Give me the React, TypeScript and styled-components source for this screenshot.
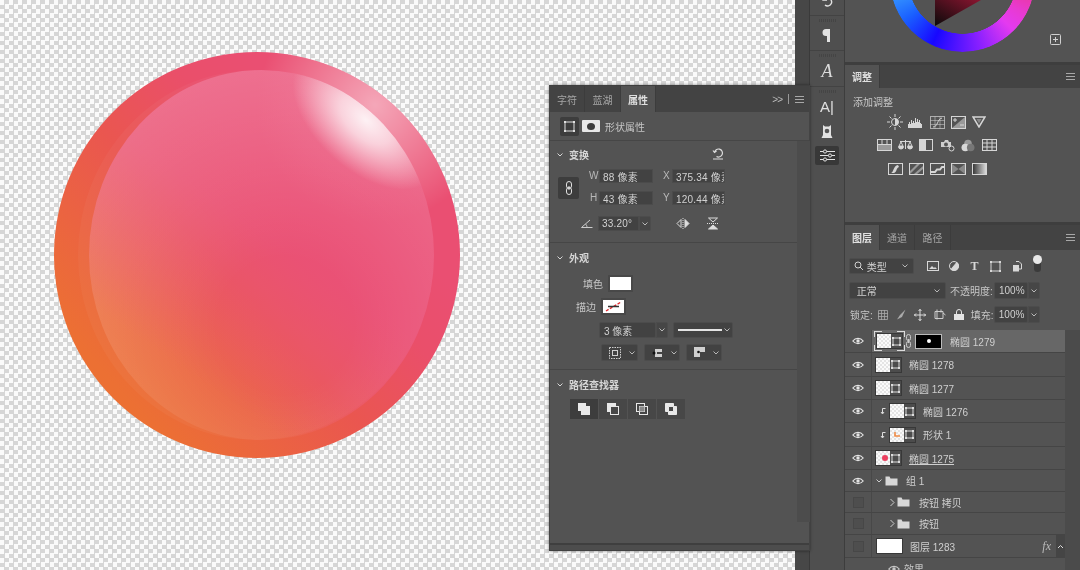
import React from 'react';
import styled, { createGlobalStyle } from 'styled-components';

const Global = createGlobalStyle`
  html, body { margin: 0; padding: 0; width: 1080px; height: 570px; overflow: hidden; background: #535353; }
  * { box-sizing: border-box; }
  body { font-family: "Liberation Sans", "Noto Sans CJK SC", sans-serif; font-size: 10px; color: #cdcdcd; }
`;

const Page = styled.div`position: relative; display: flex; width: 1080px; height: 570px; overflow: hidden; filter: blur(.3px);`;
const Canvas = styled.div`
  width: 795px; height: 570px; padding: 45px 0 0 47px; flex: none;
  background-color: #fafafa;
  background-image: conic-gradient(#d6d6d6 25%, #fafafa 0 50%, #d6d6d6 0 75%, #fafafa 0);
  background-size: 9px 9px;
`;
const SphereSvg = styled.svg`display: block;`;
const CollapsedDock = styled.div`width: 15px; flex: none; background: #474747; border-right: 1px solid #3a3a3a;`;
const IconDock = styled.div`width: 35px; flex: none; background: #4f4f4f; display: flex; flex-direction: column; border-right: 1px solid #3d3d3d;`;
const DockGroup = styled.div<{ $h: number; $top?: number }>`
  height: ${p => p.$h}px; padding-top: ${p => p.$top ?? 3}px; border-bottom: 1px solid #434343; display: flex; flex-direction: column; align-items: center; flex: none;
  &:last-child { border-bottom: 0; }
`;
const DockGrip = styled.div`width: 17px; height: 3px; flex: none; opacity: .8;
  background: repeating-linear-gradient(90deg, #424242 0 1px, transparent 1px 2px);`;
const DockSlot = styled.div<{ $h: number; $active?: boolean; $mt?: number }>`
  height: ${p => p.$h}px; width: 24px; display: flex; align-items: center; justify-content: center; flex: none; color: #e2e2e2;
  margin-top: ${p => p.$mt ?? 0}px;
  background: ${p => (p.$active ? '#383838' : 'transparent')};
  border-radius: 2px;
`;
const ScriptA = styled.span`font: italic 18px "Liberation Serif", serif; color: #dcdcdc;`;
const CursorA = styled.span`font-size: 15px; color: #e0e0e0;`;
const RightCol = styled.div`width: 235px; flex: none; display: flex; flex-direction: column; background: #535353;`;
const ColorPanel = styled.div`height: 62px; position: relative; overflow: hidden; flex: none;`;
const Wheel = styled.div`
  width: 145px; height: 145px; border-radius: 50%; margin: -93px 0 0 45px;
  background: conic-gradient(from 0deg, #f9d24a 0deg, #f2703a 40deg, #ee3355 75deg, #e83ad0 118deg, #e43af0 135deg, #8a20ff 165deg, #1808ff 205deg, #1a60ff 235deg, #3fa8ff 265deg, #39e0c0 300deg, #66e860 330deg, #f9d24a 360deg);
  -webkit-mask: radial-gradient(circle, transparent 54px, #000 54.5px);
  mask: radial-gradient(circle, transparent 54px, #000 54.5px);
`;
const Triangle = styled.svg`position: absolute; left: 89px; top: 0;`;
const PlusBox = styled.div`position: absolute; left: 205px; top: 34px; color: #d0d0d0;`;
const HDivider = styled.div<{ $h: number }>`height: ${p => p.$h}px; background: #3e3e3e; flex: none;`;
const TabBar = styled.div<{ $h: number }>`height: ${p => p.$h}px; background: #434343; display: flex; align-items: stretch; flex: none; position: relative;`;
const Tab = styled.div<{ $w: number; $active?: boolean }>`
  width: ${p => p.$w}px; display: flex; align-items: center; justify-content: center; font-size: 10px;
  background: ${p => (p.$active ? '#535353' : 'transparent')};
  color: ${p => (p.$active ? '#e0e0e0' : '#a5a5a5')};
  font-weight: ${p => (p.$active ? 600 : 400)};
  border-right: 1px solid #3c3c3c;
`;
const TabTools = styled.div`margin-left: auto; display: flex; align-items: center; gap: 5px; padding-right: 5px; color: #bbb;`;
const TabDivider = styled.span`width: 1px; height: 10px; background: #999; margin: 0 1px;`;
const Arrows = styled.span`font-size: 10px; letter-spacing: -1px;`;
const Burger = styled.div`width: 9px; height: 7px; border-top: 1px solid #a8a8a8; border-bottom: 1px solid #a8a8a8; position: relative;
  &::after { content: ''; position: absolute; left: 0; right: 0; top: 2px; height: 1px; background: #a8a8a8; }`;
const AdjustBody = styled.div`height: 134px; flex: none; padding: 6px 0 0 8px;`;
const AdjustRow = styled.div<{ $pl: number; $mt: number }>`display: flex; gap: 1px; padding-left: ${p => p.$pl}px; margin-top: ${p => p.$mt}px; color: #d6d6d6;`;
const AdjustIcon = styled.span`width: 20px; height: 16px; display: flex; align-items: center; justify-content: center;`;
const Label = styled.span<{ $w?: number; $ml?: number }>`font-size: 10px; color: #c6c6c6; white-space: nowrap; flex: none; width: ${p => (p.$w ? `${p.$w}px` : 'auto')}; margin-left: ${p => p.$ml ?? 0}px;`;

const Toolbar = styled.div<{ $h: number; $pl?: number }>`height: ${p => p.$h}px; display: flex; align-items: center; flex: none; padding-left: ${p => p.$pl ?? 4}px;`;
const Drop = styled.div<{ $w: number; $h?: number; $ml?: number; $pl?: number }>`
  width: ${p => p.$w}px; height: ${p => p.$h ?? 16}px; margin-left: ${p => p.$ml ?? 0}px; background: #424242; border: 1px solid #4c4c4c; border-radius: 2px; display: flex; align-items: center; padding: 0 ${p => (p.$pl ? 1 : 4)}px 0 ${p => p.$pl ?? 4}px; flex: none; color: #d0d0d0; font-size: 10px; white-space: nowrap; overflow: hidden;
`;
const Caret = styled.span`margin-left: auto; display: inline-flex; color: #b8b8b8;`;
const StepCaret = styled.div<{ $h?: number }>`width: 12px; height: ${p => p.$h ?? 16}px; background: #464646; border: 1px solid #4c4c4c; border-radius: 0 2px 2px 0; display: flex; align-items: center; justify-content: center; flex: none; color: #b8b8b8;`;
const FilterIcons = styled.div`display: flex; align-items: center; margin-left: 8px; color: #d8d8d8;`;
const FilterCell = styled.span`width: 21px; display: flex; align-items: center; justify-content: center;`;
const SerifT = styled.span`font: bold 12px "Liberation Serif", serif;`;
const LockIcons = styled.div`display: flex; align-items: center; gap: 8px; margin-left: 5px; margin-right: 7px; color: #aaa;`;
const Pip = styled.div`width: 7px; height: 15px; border-radius: 4px; background: #3b3b3b; position: relative; margin-top: -4px;
  &::before { content: ''; position: absolute; left: -1px; top: -2px; width: 9px; height: 9px; border-radius: 50%; background: #e8e8e8; }`;

const LayerScroll = styled.div`display: flex; flex: 1; min-height: 0;`;
const LayerList = styled.div`width: 220px; flex: none;`;
const ScrollTrack = styled.div`flex: 1; background: #4b4b4b;`;
const LayerRow = styled.div<{ $h: number; $sel?: boolean }>`
  height: ${p => p.$h}px; display: flex; align-items: center; border-bottom: 1px solid #454545; flex: none;
  background: ${p => (p.$sel ? '#676767' : 'transparent')};
`;
const EyeCell = styled.div`width: 27px; align-self: stretch; display: flex; align-items: center; justify-content: center; border-right: 1px solid #484848; flex: none; background: #535353; color: #e4e4e4;`;
const EmptyBox = styled.div`width: 11px; height: 11px; border: 1px solid #474747; background: #4e4e4e;`;
const RowBody = styled.div<{ $pl: number }>`display: flex; align-items: center; padding-left: ${p => p.$pl}px; flex: 1; height: 100%; position: relative;`;
const Thumb = styled.div`
  width: 15px; height: 16px; flex: none; border: 1px solid #383838; border-right: 0; position: relative;
  background-color: #fafafa;
  background-image: conic-gradient(#e4e4e4 25%, #fafafa 0 50%, #e4e4e4 0 75%, #fafafa 0);
  background-size: 4px 4px;
`;
const WideThumb = styled.div`width: 27px; height: 16px; background: #fff; border: 1px solid #383838; flex: none;`;
const ShapeMark = styled.div`width: 12px; height: 16px; background: #4c4c4c; border: 1px solid #383838; border-left: 0; flex: none; display: flex; align-items: center; justify-content: center; color: #dcdcdc;`;
const Mask = styled.div`width: 27px; height: 15px; background: #000; border: 1px solid #bbb; display: flex; align-items: center; justify-content: center; flex: none; margin-left: 3px;
  &::after { content: ''; width: 4px; height: 4px; border-radius: 50%; background: #fff; }`;
const Frame = styled.div`display: flex; padding: 2px; margin-left: -2px; background:
  linear-gradient(#ddd,#ddd) 0 0/8px 1px no-repeat, linear-gradient(#ddd,#ddd) 0 0/1px 6px no-repeat,
  linear-gradient(#ddd,#ddd) 100% 0/8px 1px no-repeat, linear-gradient(#ddd,#ddd) 100% 0/1px 6px no-repeat,
  linear-gradient(#ddd,#ddd) 0 100%/8px 1px no-repeat, linear-gradient(#ddd,#ddd) 0 100%/1px 6px no-repeat,
  linear-gradient(#ddd,#ddd) 100% 100%/8px 1px no-repeat, linear-gradient(#ddd,#ddd) 100% 100%/1px 6px no-repeat;`;
const LayerName = styled.span<{ $ml: number; $u?: boolean }>`margin-left: ${p => p.$ml}px; font-size: 10px; color: #cfcfcf; white-space: nowrap; text-decoration: ${p => (p.$u ? 'underline' : 'none')};`;
const RowGap = styled.span`width: 2px; flex: none;`;
const RedDot = styled.i`position: absolute; right: 2px; top: 4px; width: 6px; height: 6px; border-radius: 50%; background: #ec3f5f;`;
const ShapeFlick = styled.span`position: absolute; left: 4px; top: 3px; display: inline-flex;`;
const Fx = styled.span`position: absolute; right: 14px; font: italic 12px "Liberation Serif", serif; color: #bbb;`;
const FxBtn = styled.div`position: absolute; right: 0; top: 0; width: 9px; height: 23px; background: #454545; color: #ddd; display: flex; align-items: center; justify-content: center;`;
const ClipArrow = styled.span`position: absolute; left: 8px; display: inline-flex; color: #ddd;`;
const EffectRow = styled.div`display: flex; align-items: center; gap: 4px; padding: 3px 0 0 43px; color: #c8c8c8;`;

/* Floating properties panel */
const Properties = styled.div`
  position: absolute; left: 549px; top: 85px; width: 261px; height: 466px; background: #535353;
  border: 1px solid #444; border-bottom: 1px solid #404040; border-top: 1px solid #3f3f3f; box-shadow: 0 0 3px rgba(0,0,0,.45);
  display: flex; flex-direction: column;
`;
const PropHead = styled.div`height: 29px; display: flex; align-items: center; padding-left: 10px; border-bottom: 1px solid #464646; flex: none; color: #ddd;`;
const DarkBtn = styled.div<{ $w: number; $h: number }>`width: ${p => p.$w}px; height: ${p => p.$h}px; background: #3d3d3d; border-radius: 2px; display: flex; align-items: center; justify-content: center; flex: none; color: #e0e0e0;`;
const PillIcon = styled.div`width: 18px; height: 12px; background: #e8e8e8; border-radius: 1px; margin-left: 3px; display: flex; align-items: center; justify-content: center;
  &::after { content: ''; width: 8px; height: 7px; border-radius: 50%; background: #3c3c3c; }`;
const PropBody = styled.div`display: flex; flex: 1; min-height: 0;`;
const Sections = styled.div`width: 247px; flex: none;`;
const PropScroll = styled.div`width: 13px; height: 381px; background: #4c4c4c; flex: none;`;
const Section = styled.div<{ $h: number; $top?: number }>`height: ${p => p.$h}px; border-bottom: 1px solid #464646; padding-top: ${p => p.$top ?? 6}px; &:last-child { border-bottom: 0; }`;
const SecTitle = styled.div`height: 15px; display: flex; align-items: center; padding-left: 6px; gap: 5px; font-weight: 600; font-size: 10px; color: #d6d6d6; position: relative;`;
const ResetIcon = styled.span`position: absolute; left: 162px; top: 0; display: inline-flex; color: #ddd;`;
const Transform = styled.div`display: flex; margin-top: 7px;`;
const ChainCell = styled.div`width: 49px; padding: 8px 0 0 8px;`;
const FieldGrid = styled.div`display: grid; grid-template-columns: 54px 53px; column-gap: 19px; row-gap: 8px;`;
const FieldWrap = styled.div`position: relative;`;
const FieldLetter = styled.span<{ $left?: number }>`position: absolute; left: ${p => p.$left ?? -9}px; top: 0; line-height: 14px; font-size: 10px; color: #b9b9b9;`;
const Field = styled.div`height: 14px; background: #424242; border: 1px solid #4b4b4b; padding: 0 3px; display: flex; align-items: center; color: #d2d2d2; font-size: 10px; white-space: nowrap; overflow: hidden; letter-spacing: .2px;`;
const AngleRow = styled.div`display: flex; align-items: center; margin: 11px 0 0 31px; color: #ccc;`;
const AngleField = styled(Field)`width: 41px; height: 15px; margin-left: 5px;`;
const FlipIcons = styled.div`display: flex; align-items: center; gap: 17px; margin-left: 25px; color: #ddd;`;
const SwatchRow = styled.div<{ $mt: number; $pl: number }>`display: flex; align-items: center; gap: 5px; margin-top: ${p => p.$mt}px; padding-left: ${p => p.$pl}px;`;
const Swatch = styled.div<{ $w: number }>`width: ${p => p.$w}px; height: 17px; border: 2px solid #484848; background: #fff; flex: none; display: flex;`;
const DropRow = styled.div<{ $mt: number; $pl: number; $gap: number }>`display: flex; gap: ${p => p.$gap}px; margin-top: ${p => p.$mt}px; padding-left: ${p => p.$pl}px;`;
const LineStroke = styled.span`width: 44px; height: 1.5px; background: #e4e4e4;`;
const FinderRow = styled.div`display: flex; gap: 1px; margin: 7px 0 0 20px;`;
const FinderBtn = styled.div<{ $active?: boolean }>`width: 28px; height: 20px; display: flex; align-items: center; justify-content: center; background: ${p => (p.$active ? '#3d3d3d' : '#474747')}; color: #e8e8e8;`;
const PropFoot = styled.div`height: 7px; border-top: 2px solid #3f3f3f; background: #4d4d4d; flex: none;`;

type IP = { s?: number };
const Svg: React.FC<{ w?: number; h?: number; children: React.ReactNode }> = ({ w = 14, h = 14, children }) => (
  <svg width={w} height={h} viewBox={`0 0 ${w} ${h}`} fill="none" stroke="currentColor" strokeWidth="1">{children}</svg>
);
const Chevron: React.FC = () => <Svg w={8} h={6}><path d="M1.5 1.5 4 4l2.5-2.5" /></Svg>;
const ChevronR: React.FC = () => <Svg w={6} h={9}><path d="M1.5 1 5 4.5 1.5 8" /></Svg>;
const Eye: React.FC = () => (
  <Svg w={12} h={8}><path d="M.8 4C3.5.6 8.5.6 11.2 4 8.5 7.4 3.500 7.400.8 4Z" strokeWidth="1.2" /><circle cx="6" cy="4" r="1.7" fill="currentColor" stroke="none" /></Svg>
);
const Folder: React.FC = () => <Svg w={13} h={10}><path d="M.5 9.5v-9h4l1 2h7v7z" fill="#d8d8d8" stroke="none" /></Svg>;
const BBox: React.FC<IP> = ({ s = 10 }) => (
  <Svg w={s} h={s}><rect x="1" y="1" width={s - 2} height={s - 2} /><g fill="currentColor" stroke="none"><rect width="2" height="2" /><rect x={s - 2} width="2" height="2" /><rect y={s - 2} width="2" height="2" /><rect x={s - 2} y={s - 2} width="2" height="2" /></g></Svg>
);
const Clip: React.FC = () => <Svg w={6} h={8}><path d="M5.5 1.5H2.5v5M1 5l1.5 2L4 5" /></Svg>;

const adjustRows: { pl: number; mt: number; icons: React.ReactNode[] }[] = [
  { pl: 32, mt: 5, icons: [
    <Svg w={16} h={16}><circle cx="8" cy="8" r="3.5" /><path d="M8 4.500a3.500 3.500 0 0 1 0 7z" fill="currentColor" stroke="none" /><path d="M8 0v3M8 13v3M0 8h3M13 8h3M2.500 2.500l2 2M11.500 11.500l2 2M13.500 2.500l-2 2M4.500 11.500l-2 2" /></Svg>,
    <Svg w={16} h={12}><path d="M0 12V8h1V6h1v2h1V4h1v3h1V5h1v2h1V2h1v4h1V3h1v3h1V4h1v3h1v1h1v4z" fill="currentColor" stroke="none" /></Svg>,
    <Svg w={15} h={13}><rect x=".5" y=".5" width="14" height="12" opacity=".7" /><path d="M5 .5v12M10 .5v12M.5 4.500h14M.5 8.500h14" opacity=".5" /><path d="M3 11c5 0 4-8 9-9" /></Svg>,
    <Svg w={15} h={13}><rect x=".5" y=".5" width="14" height="12" /><path d="M14 1 1 12h13z" fill="#999" stroke="none" /><path d="M2 4h4M4 2v4M9 9h4" /></Svg>,
    <Svg w={14} h={12}><path d="M1 1h12L7 11z" strokeWidth="1.5" /><path d="M4.500 3h5L7 7.500z" fill="#888" stroke="none" /></Svg>,
  ] },
  { pl: 21, mt: 7, icons: [
    <Svg w={15} h={12}><rect x=".5" y=".5" width="14" height="11" /><path d="M5 .5v5M10 .5v5M.5 5.500h14" /><rect x="1" y="6" width="13" height="5" fill="#999" stroke="none" /></Svg>,
    <Svg w={15} h={12}><path d="M7.500 1v9M2 2.500h11M3 3 1 7h4zM12 3l-2 4h4z" /><path d="M.5 7.500a2.500 2.500 0 0 0 5 0zM9.500 7.500a2.500 2.500 0 0 0 5 0z" fill="currentColor" /></Svg>,
    <Svg w={14} h={12}><rect x=".5" y=".5" width="13" height="11" /><rect x="1" y="1" width="6" height="10" fill="currentColor" stroke="none" /></Svg>,
    <Svg w={15} h={13}><path d="M1 3h3l1-2h3l1 2h2v5H1z" fill="#cfcfcf" stroke="none" /><circle cx="6" cy="5.500" r="2" fill="#555" stroke="none" /><circle cx="11.500" cy="9.500" r="2.500" /></Svg>,
    <Svg w={14} h={13}><circle cx="7" cy="4.500" r="3.800" fill="#9a9a9a" stroke="none" /><circle cx="4.300" cy="8.500" r="3.800" fill="#d8d8d8" stroke="none" /><circle cx="9.700" cy="8.500" r="3.800" fill="#777" stroke="none" /></Svg>,
    <Svg w={15} h={12}><rect x=".5" y=".5" width="14" height="11" /><path d="M5 .5v11M10 .5v11M.5 4h14M.5 8h14" /></Svg>,
  ] },
  { pl: 32, mt: 8, icons: [
    <Svg w={15} h={12}><rect x=".5" y=".5" width="14" height="11" /><path d="M3 10c3-1 2-7 7-8l1 2c-3 1-2 5-5 6z" fill="currentColor" stroke="none" /></Svg>,
    <Svg w={15} h={12}><rect x=".5" y=".5" width="14" height="11" /><path d="M1 8 8 1h3L1 11zM5 11 14 3v3l-6 5z" fill="#999" stroke="none" /></Svg>,
    <Svg w={15} h={12}><rect x=".5" y=".5" width="14" height="11" /><path d="M1 9h4l2-2.500h3L12 4h2" strokeWidth="2" /></Svg>,
    <Svg w={15} h={12}><rect x=".5" y=".5" width="14" height="11" /><path d="M1 1 7.500 6 1 11zM14 1 7.500 6l6.500 5z" fill="#888" stroke="none" /></Svg>,
    <Svg w={15} h={12}><defs><linearGradient id="gm"><stop stopColor="#333" /><stop offset="1" stopColor="#e0e0e0" /></linearGradient></defs><rect x=".5" y=".5" width="14" height="11" fill="url(#gm)" /></Svg>,
  ] },
];

type LR = { name: string; eye?: boolean; indent?: 'clip'; kind?: 'sel' | 'thumb' | 'group' | 'folder' | 'white'; u?: boolean; mark?: 'dot' | 'shape'; h: number };
const layers: LR[] = [
  { name: '椭圆 1279', eye: true, kind: 'sel', h: 23 },
  { name: '椭圆 1278', eye: true, kind: 'thumb', h: 24 },
  { name: '椭圆 1277', eye: true, kind: 'thumb', h: 23 },
  { name: '椭圆 1276', eye: true, kind: 'thumb', indent: 'clip', h: 23 },
  { name: '形状 1', eye: true, kind: 'thumb', indent: 'clip', mark: 'shape', h: 24 },
  { name: '椭圆 1275', eye: true, kind: 'thumb', u: true, mark: 'dot', h: 23 },
  { name: '组 1', eye: true, kind: 'group', h: 22 },
  { name: '按钮 拷贝', kind: 'folder', h: 21 },
  { name: '按钮', kind: 'folder', h: 22 },
  { name: '图层 1283', kind: 'white', h: 23 },
];

const LayerBody: React.FC<{ l: LR }> = ({ l }) => {
  if (l.kind === 'sel') return (
    <RowBody $pl={4}>
      <Frame><Thumb /><ShapeMark><BBox s={9} /></ShapeMark></Frame>
      <Svg w={7} h={14}><path d="M1.500 2.500a2 2 0 0 1 4 0v2a2 2 0 0 1-4 0zM1.500 9.500a2 2 0 0 1 4 0v2a2 2 0 0 1-4 0zM3.500 5v4" stroke="#ccc" /></Svg>
      <Mask />
      <LayerName $ml={8}>{l.name}</LayerName>
    </RowBody>
  );
  if (l.kind === 'group') return (
    <RowBody $pl={3}><Chevron /><RowGap /><Folder /><LayerName $ml={8}>{l.name}</LayerName></RowBody>
  );
  if (l.kind === 'folder') return (
    <RowBody $pl={17}><ChevronR /><RowGap /><Folder /><LayerName $ml={9}>{l.name}</LayerName></RowBody>
  );
  if (l.kind === 'white') return (
    <RowBody $pl={4}><WideThumb /><LayerName $ml={7}>{l.name}</LayerName><Fx>fx</Fx><FxBtn><Svg w={7} h={5}><path d="M1 4l2.500-2.500L6 4" /></Svg></FxBtn></RowBody>
  );
  return (
    <RowBody $pl={l.indent ? 17 : 3}>
      {l.indent && <ClipArrow><Clip /></ClipArrow>}
      <Thumb>
        {l.mark === 'dot' && <RedDot />}
        {l.mark === 'shape' && <ShapeFlick><Svg w={7} h={7}><path d="M1 1v4h5" stroke="#ee8a45" strokeWidth="1.600" /></Svg></ShapeFlick>}
      </Thumb>
      <ShapeMark><BBox s={9} /></ShapeMark>
      <LayerName $ml={7} $u={l.u}>{l.name}</LayerName>
    </RowBody>
  );
};

const Sphere: React.FC = () => (
  <SphereSvg width="420" height="420" viewBox="47 45 420 420">
    <defs>
      <linearGradient id="outerG" gradientUnits="userSpaceOnUse" x1="110" y1="380" x2="350" y2="170">
        <stop offset="0" stopColor="#ec7033" />
        <stop offset=".5" stopColor="#ea5650" />
        <stop offset=".8" stopColor="#ea4f6a" />
        <stop offset="1" stopColor="#ea4f72" />
      </linearGradient>
      <radialGradient id="outerGlow" gradientUnits="userSpaceOnUse" cx="375" cy="105" r="118">
        <stop offset="0" stopColor="#fff" stopOpacity=".5" />
        <stop offset="1" stopColor="#fff" stopOpacity="0" />
      </radialGradient>
      <linearGradient id="pinkWash" gradientUnits="userSpaceOnUse" x1="200" y1="380" x2="290" y2="250">
        <stop offset="0" stopColor="#ea5078" stopOpacity="0" />
        <stop offset="1" stopColor="#ea5078" stopOpacity=".8" />
      </linearGradient>
      <radialGradient id="innerGlow" gradientUnits="userSpaceOnUse" cx="285" cy="325" r="270">
        <stop offset=".25" stopColor="#fff" stopOpacity="0" />
        <stop offset="1" stopColor="#fff" stopOpacity=".19" />
      </radialGradient>
      <radialGradient id="spot" gradientUnits="userSpaceOnUse" cx="0" cy="0" r="1" gradientTransform="translate(366 120) rotate(42) scale(88 50)">
        <stop offset="0" stopColor="#fff" stopOpacity=".9" />
        <stop offset=".35" stopColor="#fff" stopOpacity=".68" />
        <stop offset="1" stopColor="#fff" stopOpacity="0" />
      </radialGradient>
      <clipPath id="innerClip"><ellipse cx="261.500" cy="255" rx="172.500" ry="185" /></clipPath>
    </defs>
    <circle cx="257" cy="255" r="203" fill="url(#outerG)" />
    <circle cx="257" cy="255" r="203" fill="url(#outerGlow)" />
    <ellipse cx="256" cy="255" rx="178" ry="185" fill="#fff" opacity=".035" />
    <ellipse cx="261.500" cy="255" rx="172.500" ry="185" fill="url(#pinkWash)" />
    <ellipse cx="261.500" cy="255" rx="172.500" ry="185" fill="url(#innerGlow)" />
    <g clipPath="url(#innerClip)"><rect x="240" y="40" width="240" height="220" fill="url(#spot)" /></g>
  </SphereSvg>
);

export default function App() {
  return (
    <Page>
      <Global />
      <Canvas><Sphere /></Canvas>
      <CollapsedDock />
      <IconDock>
        <DockGroup $h={16} $top={0}>
          <DockSlot $h={14} $mt={-5}><Svg w={14} h={14}><path d="M3 3h5a4 4 0 1 1-3 7M3 1v4h4" strokeWidth="1.400" /></Svg></DockSlot>
        </DockGroup>
        <DockGroup $h={35}>
          <DockGrip />
          <DockSlot $h={26}><Svg w={10} h={15}><path d="M9 1H4a3.500 3.500 0 0 0 0 7h1v6h3V1" fill="currentColor" stroke="none" /></Svg></DockSlot>
        </DockGroup>
        <DockGroup $h={36}>
          <DockGrip />
          <DockSlot $h={28}><ScriptA>A</ScriptA></DockSlot>
        </DockGroup>
        <DockGroup $h={83}>
          <DockGrip />
          <DockSlot $h={26}><CursorA>A|</CursorA></DockSlot>
          <DockSlot $h={24}><Svg w={12} h={15}><path d="M2 1l2 1.500h4L10 1v10l1.500 3h-11L2 11z" fill="currentColor" stroke="none" /><circle cx="6" cy="7" r="2.300" fill="#555" stroke="none" /></Svg></DockSlot>
          <DockSlot $h={19} $mt={3} $active><Svg w={15} h={13}><path d="M0 2.500h15M0 6.500h15M0 10.500h15" /><circle cx="5" cy="2.500" r="1.600" fill="#383838" /><circle cx="10" cy="6.500" r="1.600" fill="#383838" /><circle cx="5" cy="10.500" r="1.600" fill="#383838" /></Svg></DockSlot>
        </DockGroup>
      </IconDock>
      <RightCol>
        <ColorPanel>
          <Wheel />
          <Triangle width="48" height="27" viewBox="0 0 48 27">
            <defs><linearGradient id="tri" x1="0" y1="1" x2="1" y2="0"><stop offset="0" stopColor="#0a0a0a" /><stop offset="1" stopColor="#8a1530" /></linearGradient></defs>
            <path d="M1 26V0h46z" fill="url(#tri)" />
          </Triangle>
          <PlusBox><Svg w={11} h={11}><rect x=".5" y=".5" width="10" height="10" rx="1" /><path d="M3 5.500h5M5.500 3v5" /></Svg></PlusBox>
        </ColorPanel>
        <HDivider $h={3} />
        <TabBar $h={23}>
          <Tab $w={35} $active>调整</Tab>
          <TabTools><Burger /></TabTools>
        </TabBar>
        <AdjustBody>
          <Label>添加调整</Label>
          {adjustRows.map((r, i) => (
            <AdjustRow key={i} $pl={r.pl} $mt={r.mt}>
              {r.icons.map((ic, j) => <AdjustIcon key={j}>{ic}</AdjustIcon>)}
            </AdjustRow>
          ))}
        </AdjustBody>
        <HDivider $h={3} />
        <TabBar $h={25}>
          <Tab $w={35} $active>图层</Tab>
          <Tab $w={35}>通道</Tab>
          <Tab $w={36}>路径</Tab>
          <TabTools><Burger /></TabTools>
        </TabBar>
        <Toolbar $h={32}>
          <Drop $w={65}>
            <Svg w={10} h={10}><circle cx="4" cy="4" r="3" /><path d="M6 6l3 3" /></Svg>&nbsp;类型
            <Caret><Chevron /></Caret>
          </Drop>
          <FilterIcons>
            <FilterCell><Svg w={12} h={10}><rect x=".5" y=".5" width="11" height="9" /><path d="M2 8l3-3 2 2 1-1 2 2z" fill="currentColor" stroke="none" /></Svg></FilterCell>
            <FilterCell><Svg w={10} h={10}><circle cx="5" cy="5" r="4.500" /><path d="M5 .5a4.500 4.500 0 0 1 0 9z" fill="currentColor" transform="rotate(40 5 5)" /></Svg></FilterCell>
            <FilterCell><SerifT>T</SerifT></FilterCell>
            <FilterCell><BBox s={11} /></FilterCell>
            <FilterCell><Svg w={10} h={11}><path d="M4 .5h3l2.500 2.500v5H7" /><rect x="1" y="4" width="6" height="6.500" fill="currentColor" stroke="none" /></Svg></FilterCell>
            <FilterCell><Pip /></FilterCell>
          </FilterIcons>
        </Toolbar>
        <Toolbar $h={17}>
          <Drop $w={97} $h={17}>&nbsp;正常<Caret><Chevron /></Caret></Drop>
          <Label $w={44} $ml={4}>不透明度:</Label>
          <Drop $w={34} $h={17}>100%</Drop>
          <StepCaret $h={17}><Chevron /></StepCaret>
        </Toolbar>
        <Toolbar $h={31} $pl={5}>
          <Label>锁定:</Label>
          <LockIcons>
            <Svg w={10} h={10}><path d="M.5.5h9v9h-9zM3.500 0v10M6.500 0v10M0 3.500h10M0 6.500h10" opacity=".8" /></Svg>
            <Svg w={10} h={11}><path d="M9.500.5 4 6 1 10.500 6 8z" fill="currentColor" stroke="none" /></Svg>
            <Svg w={12} h={12}><path d="M6 0v12M0 6h12M4.500 2 6 .5 7.500 2M4.500 10 6 11.500 7.500 10M2 4.500.5 6 2 7.500M10 4.500 11.500 6 10 7.500" stroke="#ddd" /></Svg>
            <Svg w={12} h={11}><path d="M1 2.500h8v7H1zM3 .5v10M7 .5v3M9 4l2.500 2" stroke="#ccc" /></Svg>
            <Svg w={10} h={11}><path d="M2.500 5V3a2.500 2.500 0 0 1 5 0v2" stroke="#e4e4e4" /><rect y="5" width="10" height="6" fill="#e4e4e4" stroke="none" /></Svg>
          </LockIcons>
          <Label $w={23}>填充:</Label>
          <Drop $w={34} $h={17}>100%</Drop>
          <StepCaret $h={17}><Chevron /></StepCaret>
        </Toolbar>
        <LayerScroll>
          <LayerList>
            {layers.map(l => (
              <LayerRow key={l.name} $h={l.h} $sel={l.kind === 'sel'}>
                <EyeCell>{l.eye ? <Eye /> : <EmptyBox />}</EyeCell>
                <LayerBody l={l} />
              </LayerRow>
            ))}
            <EffectRow><Eye /><span>效果</span></EffectRow>
          </LayerList>
          <ScrollTrack />
        </LayerScroll>
      </RightCol>

      <Properties>
        <TabBar $h={26}>
          <Tab $w={35}>字符</Tab>
          <Tab $w={36}>蓝湖</Tab>
          <Tab $w={35} $active>属性</Tab>
          <TabTools>
            <Arrows>&gt;&gt;</Arrows>
            <TabDivider />
            <Burger />
          </TabTools>
        </TabBar>
        <PropHead>
          <DarkBtn $w={19} $h={19}><BBox s={11} /></DarkBtn>
          <PillIcon />
          <Label $ml={5}>形状属性</Label>
        </PropHead>
        <PropBody>
          <Sections>
            <Section $h={102}>
              <SecTitle><Chevron />变换<ResetIcon><Svg w={12} h={13}><path d="M2.500 5.500a4 4 0 1 1 2 4M1 3.500l1.500 2 2-1.500M1 12h10" strokeWidth="1.200" /></Svg></ResetIcon></SecTitle>
              <Transform>
                <ChainCell>
                  <DarkBtn $w={21} $h={22}><Svg w={8} h={14}><path d="M1.500 3a2.500 2.500 0 0 1 5 0v2a2.500 2.500 0 0 1-5 0zM1.500 9a2.500 2.500 0 0 1 5 0v2a2.500 2.500 0 0 1-5 0zM4 5v4" /></Svg></DarkBtn>
                </ChainCell>
                <div>
                  <FieldGrid>
                    <FieldWrap><FieldLetter $left={-10}>W</FieldLetter><Field>88 像素</Field></FieldWrap>
                    <FieldWrap><FieldLetter>X</FieldLetter><Field>375.34 像素</Field></FieldWrap>
                    <FieldWrap><FieldLetter>H</FieldLetter><Field>43 像素</Field></FieldWrap>
                    <FieldWrap><FieldLetter>Y</FieldLetter><Field>120.44 像素</Field></FieldWrap>
                  </FieldGrid>
                </div>
              </Transform>
              <AngleRow>
                <Svg w={12} h={9}><path d="M.5 8.500h11M.5 8.500 9 1M6 8.500C6 7 5.500 6 4.500 5" /></Svg>
                <AngleField>33.20°</AngleField>
                <StepCaret $h={15}><Chevron /></StepCaret>
                <FlipIcons>
                  <Svg w={14} h={11}><path d="M5 1.500v8L1 5.500z" /><path d="M9 1.500v8l4-4z" fill="currentColor" /><path d="M7 0v11" strokeDasharray="1 1" /></Svg>
                  <Svg w={12} h={13}><path d="M1.500 1h9L6 5z" /><path d="M1.500 12h9L6 8z" fill="currentColor" /><path d="M0 6.500h12" strokeDasharray="1 1" /></Svg>
                </FlipIcons>
              </AngleRow>
            </Section>
            <Section $h={127} $top={7}>
              <SecTitle><Chevron />外观</SecTitle>
              <SwatchRow $mt={10} $pl={33}><Label>填色</Label><Swatch $w={25} /></SwatchRow>
              <SwatchRow $mt={6} $pl={26}><Label>描边</Label>
                <Swatch $w={25}>
                  <Svg w={21} h={13}><path d="M3 11 18 2" stroke="#e02a30" strokeDasharray="3 1.500" strokeWidth="1.400" /><path d="M5 6.500h11" stroke="#333" strokeWidth="1.500" /></Svg>
                </Swatch>
              </SwatchRow>
              <DropRow $mt={7} $pl={49} $gap={0}>
                <Drop $w={57} $h={16}>3 像素</Drop>
                <StepCaret><Chevron /></StepCaret>
                <Drop $w={60} $h={16} $ml={5} $pl={4}><LineStroke /><Caret><Chevron /></Caret></Drop>
              </DropRow>
              <DropRow $mt={6} $pl={51} $gap={6}>
                <Drop $w={37} $h={17} $pl={7}><Svg w={12} h={12}><rect x=".5" y=".5" width="11" height="11" strokeDasharray="1.500 1" /><rect x="3.500" y="3.500" width="5" height="5" /></Svg><Caret><Chevron /></Caret></Drop>
                <Drop $w={36} $h={17} $pl={7}><Svg w={10} h={10}><path d="M3 1h7v3H5v2h5v3H3z" fill="currentColor" stroke="none" /><circle cx="2" cy="5" r="1.500" fill="#111" stroke="none" /></Svg><Caret><Chevron /></Caret></Drop>
                <Drop $w={36} $h={17} $pl={7}><Svg w={11} h={11}><path d="M0 0h11v5H6v5H0z" fill="currentColor" stroke="none" /><circle cx="4.500" cy="5" r="1.300" fill="#111" stroke="none" /></Svg><Caret><Chevron /></Caret></Drop>
              </DropRow>
            </Section>
            <Section $h={80} $top={7}>
              <SecTitle><Chevron />路径查找器</SecTitle>
              <FinderRow>
                <FinderBtn $active><Svg w={12} h={12}><path d="M0 0h8v3h4v9H3V8H0z" fill="currentColor" stroke="none" /></Svg></FinderBtn>
                <FinderBtn><Svg w={12} h={12}><rect x=".500" y=".500" width="8" height="8" fill="currentColor" /><rect x="3.500" y="3.500" width="8" height="8" fill="#474747" /></Svg></FinderBtn>
                <FinderBtn><Svg w={12} h={12}><rect x=".500" y=".500" width="8" height="8" /><rect x="3.500" y="3.500" width="8" height="8" /><rect x="3.500" y="3.500" width="5" height="5" fill="#888" stroke="none" /></Svg></FinderBtn>
                <FinderBtn><Svg w={12} h={12}><path d="M.500.500h8v3h-5v5h-3zM8.500 3.500h3v8h-8v-3h5z" fill="currentColor" /></Svg></FinderBtn>
              </FinderRow>
            </Section>
          </Sections>
          <PropScroll />
        </PropBody>
        <PropFoot />
      </Properties>
    </Page>
  );
}
